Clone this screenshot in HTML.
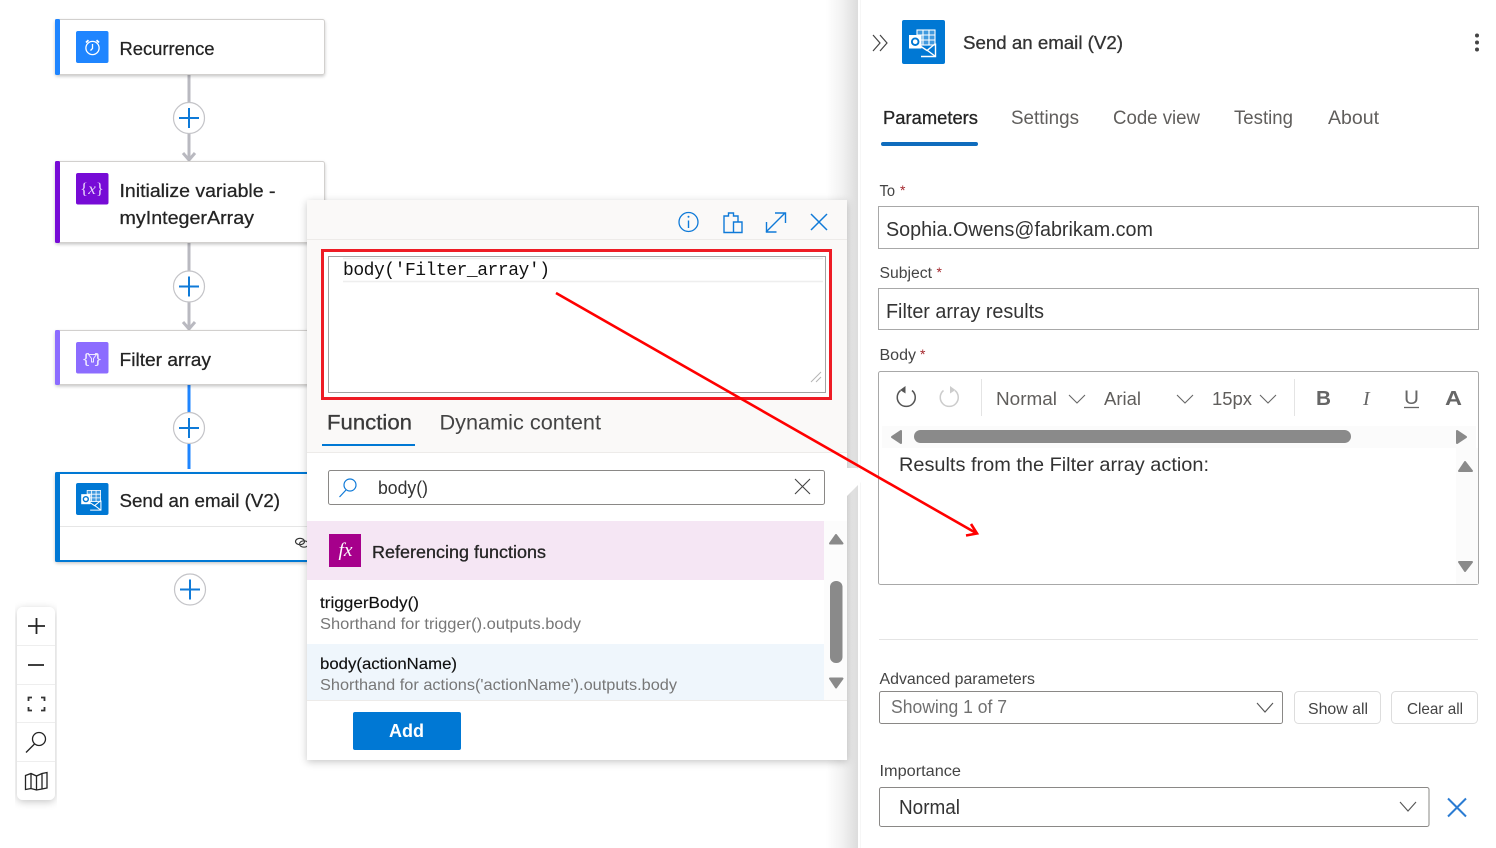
<!DOCTYPE html>
<html><head><meta charset="utf-8"><style>
html,body{margin:0;padding:0;background:#fff;width:1496px;height:848px;overflow:hidden}
svg{display:block;position:absolute;left:0;top:0}
text{font-family:"Liberation Sans",sans-serif;fill:#242424;font-size:18px}
.m{stroke:#242424;stroke-width:.3px}
.t{stroke:#242424;stroke-width:.25px}
.g{fill:#605e5c}
.mono{font-family:"Liberation Mono",monospace;fill:#111}
.tri{fill:#8a8a8a;stroke:#8a8a8a;stroke-width:2;stroke-linejoin:round}
</style></head><body>
<svg width="1496" height="848" viewBox="0 0 1496 848" xmlns="http://www.w3.org/2000/svg">
<defs>
<filter id="s" x="-5%" y="-10%" width="110%" height="125%"><feDropShadow dx="0" dy="1.5" stdDeviation="1.5" flood-color="#000" flood-opacity=".22"/></filter>
<filter id="p" x="-5%" y="-5%" width="110%" height="110%"><feDropShadow dx="0" dy="2" stdDeviation="4" flood-color="#000" flood-opacity=".22"/></filter>
<linearGradient id="band" x1="0" x2="1" y1="0" y2="0"><stop offset="0" stop-color="#fff"/><stop offset=".5" stop-color="#f2f2f2"/><stop offset="1" stop-color="#dcdcdc"/></linearGradient>
<g id="plus"><circle r="15.5" fill="#fff" stroke="#c4c4c8" stroke-width="1.2"/><path d="M-10 0H10M0-10V10" stroke="#0f7ad8" stroke-width="2" fill="none"/></g>
<g id="ol" fill="none">
<rect x="15" y="10" width="18" height="15" fill="#fff" fill-opacity=".25" stroke="#fff" stroke-width="1.1"/>
<path d="M15 15H33M15 20H33M21 10V25M27 10V25" stroke="#fff" stroke-width="1.1"/>
<path d="M19 36.500H33.500V23.500" stroke="#fff" stroke-width="1.400"/>
<path d="M19 26.500L25 30.500L33.500 23.500M25.500 30.500L33.500 36.500" stroke="#fff" stroke-width="1.400"/>
<rect x="7" y="15" width="12.500" height="13.500" fill="#fff"/>
<circle cx="13.200" cy="21.700" r="3.300" stroke="#0078d4" stroke-width="1.900"/>
</g>
</defs>

<!-- connectors -->
<path d="M189 74V160M183 153L189 160L195 153" stroke="#b9b9c0" stroke-width="3" fill="none"/>
<path d="M189 243V329M183 322L189 329L195 322" stroke="#b9b9c0" stroke-width="3" fill="none"/>
<path d="M189 385V469" stroke="#1f85ff" stroke-width="3" fill="none"/>
<use href="#plus" x="189" y="118"/>
<use href="#plus" x="189" y="286.5"/>
<use href="#plus" x="189" y="428"/>
<use href="#plus" x="190" y="589.5"/>

<!-- cards -->
<g filter="url(#s)"><rect x="55.5" y="19.5" width="269" height="55" rx="2" fill="#fff" stroke="#d2d0ce"/></g>
<rect x="55" y="19" width="5" height="56" rx="1.5" fill="#1f85ff"/>
<rect x="76" y="31" width="32.5" height="32" rx="2" fill="#1f85ff"/>
<g fill="none" stroke="#fff" stroke-width="1.3"><circle cx="92.5" cy="48" r="6.6"/><path d="M92.5 44V48.5L90.5 50.5"/><path d="M86 42.5L88.5 40.2M99 42.5L96.5 40.2" stroke-width="1.8"/></g>
<text class="t" x="119.500" y="55" textLength="95" lengthAdjust="spacingAndGlyphs">Recurrence</text>

<g filter="url(#s)"><rect x="55.5" y="161.5" width="269" height="81" rx="2" fill="#fff" stroke="#d2d0ce"/></g>
<rect x="55" y="161" width="5" height="82" rx="1.5" fill="#770bd6"/>
<rect x="76" y="173" width="32.5" height="31.5" rx="2" fill="#770bd6"/>
<text x="80" y="194" textLength="24" lengthAdjust="spacingAndGlyphs" style="font-family:'Liberation Serif',serif;font-size:16px;fill:#e8d4fa">{<tspan font-style="italic">x</tspan>}</text>
<text class="t" x="119.500" y="197" textLength="156" lengthAdjust="spacingAndGlyphs">Initialize variable -</text>
<text class="t" x="119.500" y="224" textLength="134.500" lengthAdjust="spacingAndGlyphs">myIntegerArray</text>

<g filter="url(#s)"><rect x="55.5" y="330.5" width="269" height="54" rx="2" fill="#fff" stroke="#d2d0ce"/></g>
<rect x="55" y="330" width="5" height="55" rx="1.5" fill="#8c6cff"/>
<rect x="76" y="342" width="32.5" height="31.5" rx="2" fill="#8c6cff"/>
<text x="83" y="363" textLength="18" lengthAdjust="spacingAndGlyphs" style="font-size:14px;fill:#eee8ff">{ }</text>
<path d="M88.5 354.5H96.5L93.5 358.5V362H91.5V358.5Z" fill="none" stroke="#eee8ff" stroke-width="1"/>
<text class="t" x="119.500" y="366" textLength="91.500" lengthAdjust="spacingAndGlyphs">Filter array</text>

<g filter="url(#s)"><rect x="56" y="473" width="268" height="88" rx="2" fill="#fff" stroke="#0078d4" stroke-width="2"/></g>
<rect x="55" y="472" width="5" height="90" rx="1.5" fill="#0078d4"/>
<path d="M60 526.5H324" stroke="#e6e6e6"/>
<rect x="76" y="483" width="32.5" height="32" rx="2" fill="#0078d4"/>
<g transform="translate(76 483) scale(.744)"><use href="#ol"/></g>
<text class="t" x="119.500" y="507" textLength="160.500" lengthAdjust="spacingAndGlyphs">Send an email (V2)</text>
<g fill="none" stroke="#333" stroke-width="1.2"><ellipse cx="300" cy="541.5" rx="4.5" ry="3.2"/><ellipse cx="304" cy="544" rx="4.5" ry="3.2" stroke="#444"/></g>

<!-- zoom controls -->
<g filter="url(#p)"><rect x="17" y="607" width="38" height="193" rx="6" fill="#fff"/></g>
<path d="M17 645.5H55M17 684.5H55M17 722.5H55M17 761.5H55" stroke="#eee"/>
<path d="M28 626H45M36.500 618V634M28 665H44" stroke="#242424" stroke-width="1.8" fill="none"/>
<path d="M28.500 701V697.500H32M41 697.500H44.500V701M44.500 707V710.500H41M32 710.500H28.500V707" stroke="#333" stroke-width="1.8" fill="none"/>
<circle cx="39" cy="739" r="6.500" fill="none" stroke="#242424" stroke-width="1.300"/><path d="M34.500 744L26 752.500" stroke="#242424" stroke-width="1.300"/>
<path d="M25.500 775.500L31 773.500L36.500 776L42 773.500L47 772.500V788L42 789L36.500 790L31 788.500L25.500 789.500ZM31 773.500V788.500M36.500 776V790M42 773.500V789" fill="none" stroke="#242424" stroke-width="1.300"/>

<!-- panel band -->
<rect x="826" y="0" width="32" height="848" fill="url(#band)"/>
<rect x="858" y="0" width="638" height="848" fill="#fff"/>
<path d="M860.500 0V848" stroke="#f6f6f6"/>

<!-- popup -->
<g filter="url(#p)"><rect x="307" y="200" width="540" height="560" fill="#fff"/></g>
<rect x="307" y="200" width="540" height="252" fill="#faf9f8"/>
<path d="M847 496L866 477L857 468L847 468Z" fill="#fff"/>
<path d="M307 239.500H847M307 452.500H847" stroke="#edebe9"/>
<circle cx="688.500" cy="222" r="9.500" fill="none" stroke="#0f7ad8" stroke-width="1.300"/><path d="M688.500 220.500V228" stroke="#0f7ad8" stroke-width="1.400"/><circle cx="688.500" cy="216.800" r="1" fill="#0f7ad8"/>
<path d="M733.500 232.500H724V216H728.500V213H733.500V216H738V222M733.500 222H742V232.500H733.500Z" fill="none" stroke="#0f7ad8" stroke-width="1.400"/>
<path d="M766 232L785 213M775 213H785.500V223M766.500 222V232H776.500" fill="none" stroke="#0f7ad8" stroke-width="1.400"/>
<path d="M811 214L827 230M827 214L811 230" stroke="#0f7ad8" stroke-width="1.500"/>
<rect x="322.500" y="250.500" width="508" height="148" fill="#fff" stroke="#ee1c25" stroke-width="3"/>
<rect x="328.500" y="256.500" width="497" height="136" fill="#fff" stroke="#a3a3a3"/>
<path d="M343 258.500H823M343 281.500H823" stroke="#eee" stroke-width="1.500"/>
<text class="mono" x="343" y="275" textLength="207">body('Filter_array')</text>
<path d="M811 382L821 372M816 382L821 377" stroke="#b5b5b5" stroke-width="1"/>
<text class="m" x="327" y="429.500" textLength="85" lengthAdjust="spacingAndGlyphs" style="font-size:21px;fill:#3a3a3a;stroke:#3a3a3a">Function</text>
<rect x="322" y="444" width="93" height="2" fill="#0078d4"/>
<text x="439.500" y="429.500" textLength="161.500" lengthAdjust="spacingAndGlyphs" style="font-size:21px;fill:#444">Dynamic content</text>
<rect x="328.500" y="470.500" width="496" height="34" rx="2" fill="#fff" stroke="#8a8886"/>
<circle cx="350" cy="485" r="6" fill="none" stroke="#0f7ad8" stroke-width="1.200"/><path d="M346 490L339.500 497" stroke="#0f7ad8" stroke-width="1.200"/>
<text x="378" y="494" textLength="50" lengthAdjust="spacingAndGlyphs" style="fill:#333">body()</text>
<path d="M795 479L810 494M810 479L795 494" stroke="#444" stroke-width="1.100"/>
<rect x="307" y="521" width="517" height="59" fill="#f5e6f4"/>
<rect x="329" y="534" width="32" height="33" fill="#a6008b"/>
<text x="338.500" y="556" textLength="14" lengthAdjust="spacingAndGlyphs" style="font-family:'Liberation Serif',serif;font-style:italic;font-size:19px;fill:#fff">fx</text>
<text class="m" x="372" y="558" textLength="174" lengthAdjust="spacingAndGlyphs" style="font-size:17.500px">Referencing functions</text>
<text class="t" x="320" y="608" textLength="99" lengthAdjust="spacingAndGlyphs" style="font-size:16px;fill:#111;stroke:#111;stroke-width:.15px">triggerBody()</text>
<text x="320" y="629" textLength="261" lengthAdjust="spacingAndGlyphs" style="font-size:16px;fill:#777">Shorthand for trigger().outputs.body</text>
<rect x="307" y="644" width="517" height="56" fill="#eff6fc"/>
<text class="t" x="320" y="669" textLength="137" lengthAdjust="spacingAndGlyphs" style="font-size:16px;fill:#111;stroke:#111;stroke-width:.15px">body(actionName)</text>
<text x="320" y="690" textLength="357" lengthAdjust="spacingAndGlyphs" style="font-size:16px;fill:#777">Shorthand for actions('actionName').outputs.body</text>
<rect x="824" y="521" width="23" height="179" fill="#fcfcfc"/>
<path class="tri" d="M830 543.500L836 535L842.500 543.500Z"/>
<rect x="830" y="581" width="12.500" height="82" rx="6" fill="#8a8a8a"/>
<path class="tri" d="M830 678.500L836 687.500L842.500 678.500Z"/>
<path d="M307 700.500H847" stroke="#edebe9"/>
<rect x="353" y="712" width="108" height="38" rx="2" fill="#0078d4"/>
<text x="389" y="737" textLength="35" lengthAdjust="spacingAndGlyphs" style="font-weight:bold;fill:#fff">Add</text>

<!-- right panel -->
<path d="M873 35L880 43L873 51M880 35L887 43L880 51" fill="none" stroke="#444" stroke-width="1.200"/>
<rect x="902" y="20" width="43" height="44" rx="2" fill="#0078d4"/>
<g transform="translate(902 20)"><use href="#ol"/></g>
<text class="m" x="963" y="49" textLength="160" lengthAdjust="spacingAndGlyphs" style="fill:#333;stroke:#333">Send an email (V2)</text>
<circle cx="1477" cy="35.500" r="2" fill="#444"/><circle cx="1477" cy="42.500" r="2" fill="#444"/><circle cx="1477" cy="49.500" r="2" fill="#444"/>
<text class="m" x="883" y="124" textLength="95" lengthAdjust="spacingAndGlyphs">Parameters</text>
<text class="g" x="1011" y="124" textLength="68" lengthAdjust="spacingAndGlyphs" style="font-size:19px">Settings</text>
<text class="g" x="1113" y="124" textLength="87" lengthAdjust="spacingAndGlyphs" style="font-size:19px">Code view</text>
<text class="g" x="1234" y="124" textLength="59" lengthAdjust="spacingAndGlyphs" style="font-size:19px">Testing</text>
<text class="g" x="1328" y="124" textLength="51" lengthAdjust="spacingAndGlyphs" style="font-size:19px">About</text>
<rect x="881" y="142" width="97" height="4" rx="2" fill="#0f6cbd"/>

<text x="879.500" y="196" textLength="15.500" lengthAdjust="spacingAndGlyphs" style="font-size:15.500px;fill:#444">To</text><text x="900" y="195" style="font-size:14px;fill:#a4262c">*</text>
<rect x="878.500" y="206.500" width="600" height="42" fill="#fff" stroke="#a8a8a8"/>
<text x="886" y="236" textLength="267" lengthAdjust="spacingAndGlyphs" style="font-size:20px;fill:#333">Sophia.Owens@fabrikam.com</text>
<text x="879.500" y="278" textLength="52.500" lengthAdjust="spacingAndGlyphs" style="font-size:15.500px;fill:#444">Subject</text><text x="936.500" y="277" style="font-size:14px;fill:#a4262c">*</text>
<rect x="878.500" y="288.500" width="600" height="41" fill="#fff" stroke="#a8a8a8"/>
<text x="886" y="318" textLength="158" lengthAdjust="spacingAndGlyphs" style="font-size:20px;fill:#333">Filter array results</text>
<text x="879.500" y="360" textLength="36.500" lengthAdjust="spacingAndGlyphs" style="font-size:15.500px;fill:#444">Body</text><text x="920" y="359" style="font-size:14px;fill:#a4262c">*</text>
<rect x="878.500" y="371.500" width="600" height="213" rx="2" fill="#fff" stroke="#a8a8a8"/>
<path d="M900.500 390.500A9 9 0 1 0 912 390.500" fill="none" stroke="#555" stroke-width="1.500"/><path d="M905.500 386V393.500L900 390Z" fill="#555"/>
<path d="M955 390.500A9 9 0 1 1 943.500 390.500" fill="none" stroke="#ccc" stroke-width="1.500"/><path d="M950 386V393.500L955.500 390Z" fill="#ccc"/>
<path d="M981.500 379V416M1294.500 379V416" stroke="#e4e4e4"/>
<text class="g" x="996" y="405" textLength="61" lengthAdjust="spacingAndGlyphs">Normal</text>
<text class="g" x="1104" y="405" textLength="37" lengthAdjust="spacingAndGlyphs">Arial</text>
<text class="g" x="1212" y="405" textLength="40" lengthAdjust="spacingAndGlyphs">15px</text>
<path d="M1069 395L1077 403L1085 395M1177 395L1185 403L1193 395M1260 395L1268 403L1276 395" fill="none" stroke="#666" stroke-width="1.100"/>
<text x="1316" y="405" textLength="15" lengthAdjust="spacingAndGlyphs" style="font-size:20px;font-weight:bold;fill:#666">B</text>
<text x="1363" y="405" style="font-family:'Liberation Serif',serif;font-size:20px;font-style:italic;fill:#666">I</text>
<text x="1404" y="404" textLength="15" lengthAdjust="spacingAndGlyphs" style="font-size:19px;fill:#666">U</text><path d="M1404 407.500H1419" stroke="#666" stroke-width="1.300"/>
<text x="1445" y="405" textLength="17" lengthAdjust="spacingAndGlyphs" style="font-size:20px;font-weight:bold;fill:#666">A</text>
<rect x="882" y="426" width="594" height="22" fill="#fbfbfb"/>
<path class="tri" d="M901 431V443L892 437Z"/>
<rect x="914" y="430" width="437" height="13" rx="6.500" fill="#8a8a8a"/>
<path class="tri" d="M1457 431V443L1466 437Z"/>
<rect x="1456" y="448" width="22" height="136" fill="#fbfbfb"/>
<path class="tri" d="M1459 471L1465 462L1472 471Z"/>
<path class="tri" d="M1459 562L1465 571L1472 562Z"/>
<text x="899" y="471" textLength="310" lengthAdjust="spacingAndGlyphs" style="font-size:19.500px;fill:#333">Results from the Filter array action:</text>
<path d="M879 639.500H1478" stroke="#e4e4e4"/>
<text x="879.500" y="684" textLength="155.500" lengthAdjust="spacingAndGlyphs" style="font-size:16px;fill:#444">Advanced parameters</text>
<rect x="879.500" y="691.500" width="403" height="32" rx="2" fill="#fff" stroke="#8a8886"/>
<text x="891" y="713" textLength="116" lengthAdjust="spacingAndGlyphs" style="fill:#707070">Showing 1 of 7</text>
<path d="M1257 703L1265 712L1273 703" fill="none" stroke="#555" stroke-width="1.100"/>
<rect x="1294.500" y="691.500" width="86" height="32" rx="4" fill="#fff" stroke="#ddd"/>
<text x="1308" y="714" textLength="60" lengthAdjust="spacingAndGlyphs" style="font-size:16px;fill:#444">Show all</text>
<rect x="1391.500" y="691.500" width="86" height="32" rx="4" fill="#fff" stroke="#ddd"/>
<text x="1407" y="714" textLength="56" lengthAdjust="spacingAndGlyphs" style="font-size:16px;fill:#444">Clear all</text>
<text x="879.500" y="776" textLength="81.500" lengthAdjust="spacingAndGlyphs" style="font-size:16px;fill:#444">Importance</text>
<rect x="879.500" y="787.500" width="549.500" height="39" rx="2" fill="#fff" stroke="#8a8886"/>
<text x="899" y="814" textLength="61" lengthAdjust="spacingAndGlyphs" style="font-size:20px;fill:#333">Normal</text>
<path d="M1400 802L1408 811L1416 802" fill="none" stroke="#555" stroke-width="1.100"/>
<path d="M1448 798.500L1466 816.500M1466 798.500L1448 816.500" stroke="#2b7cd3" stroke-width="2"/>

<!-- annotation -->
<path d="M556 293L976 533M966 535.500L977 533.500L971 524" fill="none" stroke="#f00" stroke-width="2.600"/>
</svg>
</body></html>
